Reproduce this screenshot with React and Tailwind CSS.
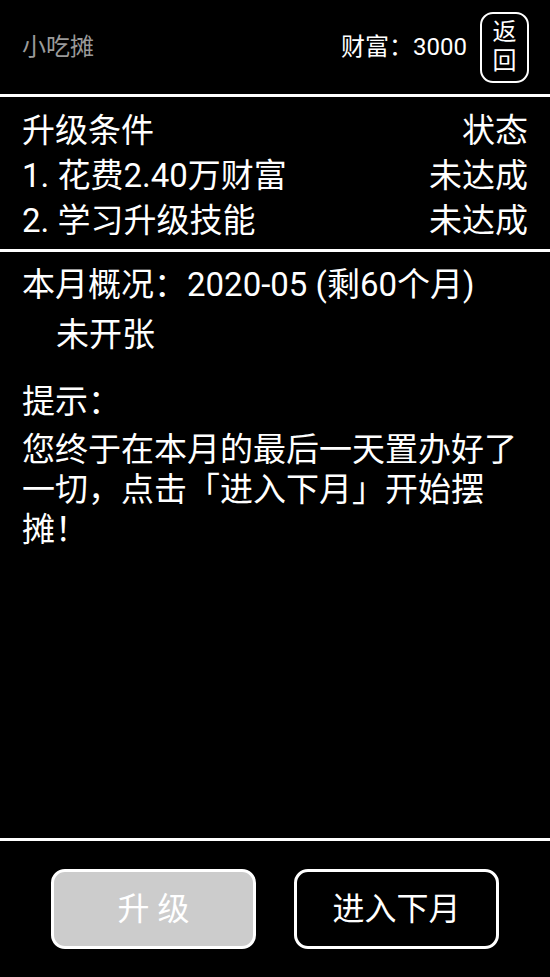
export default function App() {
  const font = { fontFamily: 'Roboto, "Noto Sans CJK SC", sans-serif' };
  const conditions = [
    { label: "1. 花费2.40万财富", status: "未达成" },
    { label: "2. 学习升级技能", status: "未达成" },
  ];

  return (
    <div className="w-full h-[977px] bg-black text-white flex flex-col" style={font}>
      {/* top bar */}
      <header className="h-[94px] flex items-center justify-between pl-[22px] pr-[21px]">
        <span className="text-[24px] text-[#9a9a9a]">小吃摊</span>
        <div className="flex items-center gap-[13px]">
          <span className="text-[24px]">财富：3000</span>
          <button className="w-[49px] h-[71px] border-[2.5px] border-white rounded-[13px] flex flex-col items-center justify-center text-[24px] leading-[29px] text-white">
            <span>返</span>
            <span>回</span>
          </button>
        </div>
      </header>
      <div className="h-[3px] bg-white" />

      {/* upgrade conditions */}
      <section className="px-[22px] pt-[11px] pb-[6px] text-[33px] leading-[45px]">
        <div className="flex justify-between">
          <span>升级条件</span>
          <span>状态</span>
        </div>
        {conditions.map((c) => (
          <div key={c.label} className="flex justify-between">
            <span>{c.label}</span>
            <span>{c.status}</span>
          </div>
        ))}
      </section>
      <div className="h-[3px] bg-white" />

      {/* month summary */}
      <main className="flex-1 px-[22px] pt-[13px] text-[33px] leading-[40px]">
        <div>本月概况：2020-05 (剩60个月)</div>
        <div className="mt-[10px] pl-[34px]">未开张</div>
        <div className="mt-[27px]">提示：</div>
        <p className="mt-[8px]">您终于在本月的最后一天置办好了一切，点击「进入下月」开始摆摊！</p>
      </main>
      <div className="h-[3px] bg-white" />

      {/* actions */}
      <footer className="h-[136px] flex items-center justify-center gap-[38px]">
        <button className="w-[205px] h-[80px] border-[3px] border-white rounded-[14px] bg-[#cccccc] text-white text-[32px]">
          升 级
        </button>
        <button className="w-[205px] h-[80px] border-[3px] border-white rounded-[14px] bg-black text-white text-[32px]">
          进入下月
        </button>
      </footer>
    </div>
  );
}
